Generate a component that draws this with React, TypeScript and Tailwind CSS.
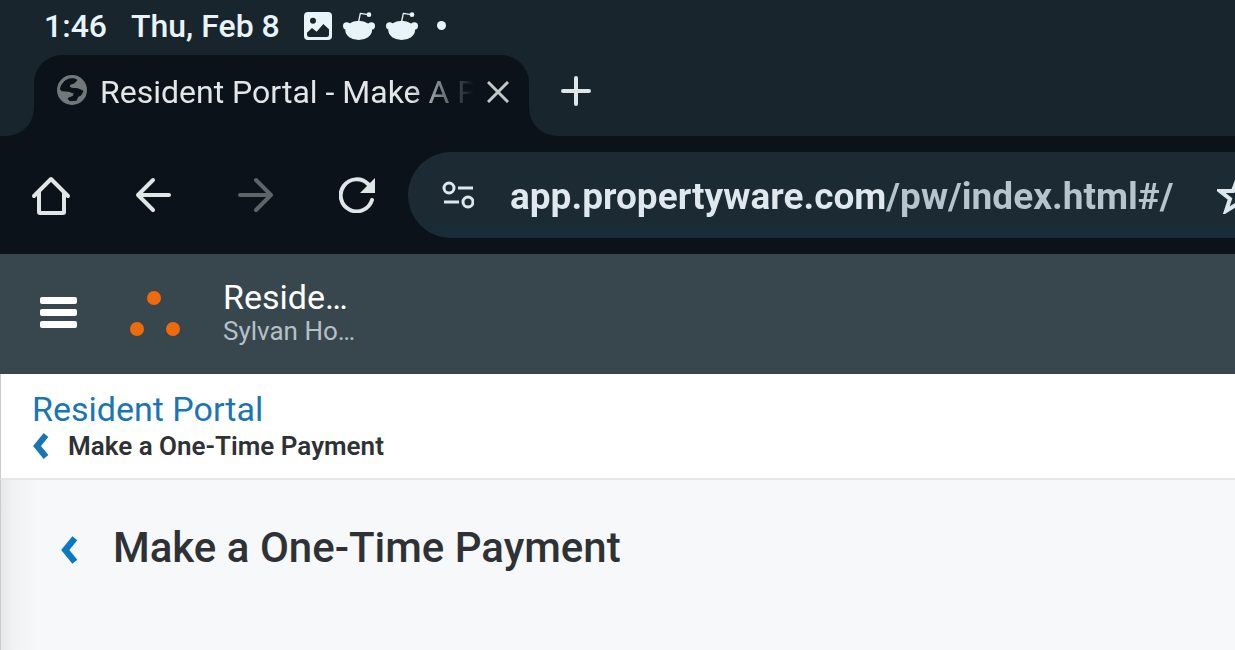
import type { ReactNode } from 'react'

export default function App() {
  return (
    <div className="flex min-h-screen flex-col overflow-hidden bg-[#f6f8fa] font-[Roboto,sans-serif]">
      <StatusBar />
      <TabStrip />
      <Toolbar />
      <PortalHeader />
      <Breadcrumb />
      <main className="flex flex-1 border-l border-[#c9cbcd] bg-[linear-gradient(90deg,#e6e7e8_0px,#f1f2f3_12px,#f6f8fa_36px)]">
        <div className="mt-11 flex h-12 items-center gap-8 pl-14">
          <button type="button" aria-label="Back" className="flex w-6 justify-center pt-1">
            <BackChevron className="h-7 w-[18px] text-[#0a78c3]" />
          </button>
          <h1 className="text-[42px] leading-12 font-medium text-[#2f3235]">Make a One-Time Payment</h1>
        </div>
      </main>
    </div>
  )
}

function StatusBar() {
  return (
    <div className="flex h-[55px] items-center gap-6 bg-[#18252c] pb-1 pl-11 text-[32px] leading-10 font-medium text-[#e9f3fa]">
      <span>1:46</span>
      <span>Thu, Feb 8</span>
      <div className="flex items-center gap-[11px]">
        <svg viewBox="0 0 84 84" className="size-7" fill="currentColor">
          <path
            fillRule="evenodd"
            d="M12 0h60a12 12 0 0 1 12 12v60a12 12 0 0 1-12 12H12A12 12 0 0 1 0 72V12A12 12 0 0 1 12 0ZM27 17a9 9 0 1 0 0 18a9 9 0 0 0 0-18ZM9 62v6q0 7 7 7h52q7 0 7-7V52L58 36L38 59L24 48Z"
          />
        </svg>
        <RedditIcon />
        <RedditIcon />
        <span className="ml-2 size-[9px] rounded-full bg-[#e9f3fa]" />
      </div>
    </div>
  )
}

function RedditIcon() {
  return (
    <svg viewBox="0 0 96 84" className="h-7 w-8" fill="currentColor">
      <ellipse cx="47" cy="55" rx="40" ry="29" />
      <circle cx="11" cy="42" r="11" />
      <circle cx="85" cy="42" r="11" />
      <circle cx="78" cy="8" r="7" />
      <path d="M47 28L52 4L76 8" fill="none" stroke="currentColor" strokeWidth="4" strokeLinejoin="round" />
    </svg>
  )
}

function TabStrip() {
  return (
    <div className="flex h-[81px] bg-[#0b1219]">
      <div className="w-[34px] rounded-br-[28px] bg-[#18252c]" />
      <div className="bg-[#18252c]">
        <div className="flex h-full w-[495px] items-start rounded-t-[28px] bg-[#0b1219] pt-[17px] pl-[23px]">
          <div className="flex h-10 items-center">
            <GlobeIcon />
            <span className="ml-[13px] w-[387px] text-[32px] leading-10 whitespace-nowrap text-[#e3e6e8] [mask-image:linear-gradient(90deg,#000_310px,transparent_374px)]">
              Resident Portal - Make A P
            </span>
            <button type="button" aria-label="Close tab">
              <svg viewBox="0 0 22 22" className="size-[22px] text-[#c3c7ca]" fill="none" stroke="currentColor" strokeWidth="3">
                <path d="M1 1L21 21M21 1L1 21" />
              </svg>
            </button>
          </div>
        </div>
      </div>
      <div className="flex flex-1 items-start rounded-bl-[28px] bg-[#18252c] pt-[21px] pl-8">
        <button type="button" aria-label="New tab">
          <svg viewBox="0 0 30 30" className="size-[30px] text-[#dfe6ea]" fill="none" stroke="currentColor" strokeWidth="4" strokeLinecap="round">
            <path d="M15 2V28M2 15H28" />
          </svg>
        </button>
      </div>
    </div>
  )
}

function GlobeIcon() {
  return (
    <svg viewBox="0 0 90 90" className="mb-1 size-[30px] shrink-0">
      <circle cx="45" cy="45" r="45" fill="#73787b" />
      <path
        d="M10 42L14 30L24 18L36 12L50 11L60 15L52 24L40 28L36 34L44 40L62 41L78 48L72 60L62 65L58 76L38 77L33 70L48 64L52 55L36 49L14 47Z"
        fill="#0b1219"
        stroke="#0b1219"
        strokeWidth="3"
        strokeLinejoin="round"
      />
    </svg>
  )
}

function NavButton({ label, disabled = false, children }: { label: string; disabled?: boolean; children: ReactNode }) {
  return (
    <button type="button" aria-label={label} disabled={disabled} className="flex size-10 items-center justify-center text-[#e0e5e8] disabled:text-[#5f6468]">
      {children}
    </button>
  )
}

function Toolbar() {
  return (
    <div className="flex h-[118px] items-center bg-[#0b1219] pl-[31px]">
      <div className="flex shrink-0 items-center gap-[62px] pr-[31px]">
        <NavButton label="Home">
          <svg viewBox="0 0 40 40" className="size-10 shrink-0" fill="none" stroke="currentColor" strokeWidth="4" strokeLinecap="round" strokeLinejoin="round">
            <path d="M3 21L20 4L37 21M8 17V37Q8 38 9 38H32Q33 38 33 37V17" />
          </svg>
        </NavButton>
        <NavButton label="Back">
          <svg viewBox="0 0 36 36" className="size-9" fill="none" stroke="currentColor" strokeWidth="4" strokeLinecap="round" strokeLinejoin="round">
            <path d="M34 18H3M18 3L3 18L18 33" />
          </svg>
        </NavButton>
        <NavButton label="Forward" disabled>
          <svg viewBox="0 0 36 36" className="size-9" fill="none" stroke="currentColor" strokeWidth="4" strokeLinecap="round" strokeLinejoin="round">
            <path d="M3 18H34M19 3L34 18L19 33" />
          </svg>
        </NavButton>
        <NavButton label="Reload">
          <svg viewBox="0 0 36 36" className="size-9" fill="none" stroke="currentColor" strokeWidth="4" strokeLinecap="round">
            <path d="M33 23A16 16 0 1 1 29 7" />
            <path d="M36 1V16H21Z" fill="currentColor" stroke="none" />
          </svg>
        </NavButton>
      </div>
      <div className="flex h-[86px] min-w-0 flex-1 items-center rounded-l-full bg-[linear-gradient(180deg,#1c2b33_82%,#182d37_92%)] pl-[34px]">
        <button type="button" aria-label="Site settings" className="shrink-0">
          <svg viewBox="0 0 32 28" className="h-7 w-8 text-[#dde8ee]" fill="none" stroke="currentColor" strokeWidth="3">
            <circle cx="7" cy="7" r="5" />
            <circle cx="26" cy="21" r="5" />
            <path d="M16 7H31M2 21H17" />
          </svg>
        </button>
        {/* Host part is brighter than the path */}
        <input
          type="text"
          aria-label="Address"
          defaultValue="app.propertyware.com/pw/index.html#/"
          className="ml-9 h-[52px] min-w-0 flex-1 bg-[linear-gradient(90deg,#dfe8ef_377px,#b6c5cd_377px)] bg-clip-text pt-1 text-[37px] font-bold text-transparent outline-none"
        />
        <button type="button" aria-label="Bookmark this page" className="ml-[42px] flex w-[18px] shrink-0 overflow-hidden">
          <svg viewBox="0 0 40 38" className="h-[38px] w-10 shrink-0 text-[#dde8ee]" fill="none" stroke="currentColor" strokeWidth="4">
            <path d="M20 4L24 15L37 15L27 23L31 35L20 28L9 35L13 23L3 15L16 15Z" />
          </svg>
        </button>
      </div>
    </div>
  )
}

function PortalHeader() {
  return (
    <header className="flex h-[120px] items-center bg-[#38474e] pb-[3px] pl-10">
      <button type="button" aria-label="Menu" className="flex w-[37px] flex-col gap-[5px]">
        <span className="h-[7px] w-full rounded-xs bg-white" />
        <span className="h-[7px] w-full rounded-xs bg-white" />
        <span className="h-[7px] w-full rounded-xs bg-white" />
      </button>
      <svg viewBox="0 0 52 48" className="ml-[52px] h-12 w-[52px]" fill="#ee6a0b">
        <circle cx="25" cy="9" r="7" />
        <circle cx="8" cy="40" r="7" />
        <circle cx="44" cy="40" r="7" />
      </svg>
      <div className="ml-[42px]">
        <p className="text-[34px] leading-9 text-white">Reside…</p>
        <p className="text-[26px] leading-8 text-[#b4c0c6]">Sylvan Ho…</p>
      </div>
    </header>
  )
}

function Breadcrumb() {
  return (
    <nav className="h-[106px] border-b-2 border-l border-b-[#e4e6e8] border-l-[#c9cbcd] bg-white pt-[15px] pl-[31px]">
      <a href="#" className="block text-[34px] leading-10 text-[#1a75b5]">Resident Portal</a>
      <a href="#" className="flex items-center gap-[19px]">
        <BackChevron className="h-[26px] w-[17px] text-[#1a75b5]" />
        <span className="text-[26px] leading-[34px] font-semibold text-[#2f3235]">Make a One-Time Payment</span>
      </a>
    </nav>
  )
}

function BackChevron({ className }: { className: string }) {
  return (
    <svg viewBox="0 0 17 26" className={className} fill="none" stroke="currentColor" strokeWidth="6">
      <path d="M14 2L5 13L14 24" />
    </svg>
  )
}
